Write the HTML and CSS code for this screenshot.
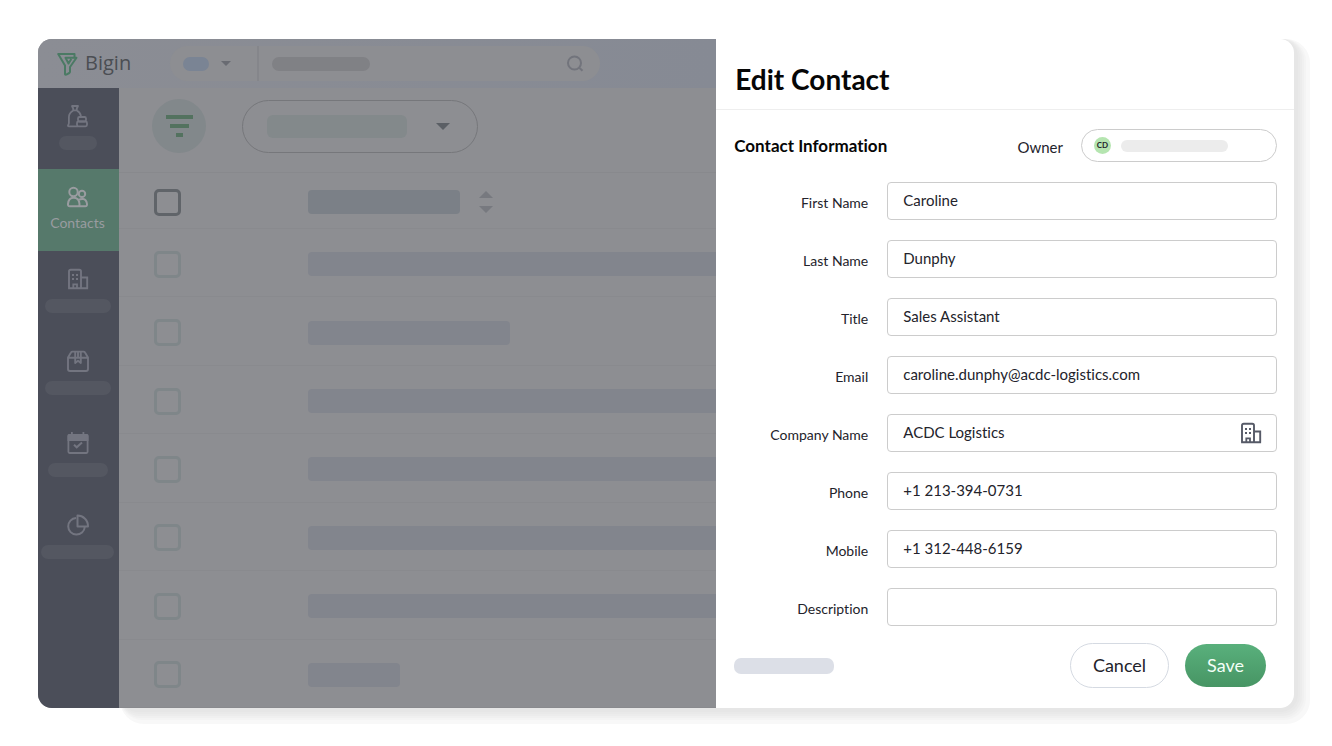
FILE: index.html
```html
<!DOCTYPE html>
<html lang="en">
<head>
<meta charset="utf-8">
<title>Bigin - Edit Contact</title>
<link rel="stylesheet" href="styles.css">
</head>
<body>
<svg class="sprite" aria-hidden="true">
  <symbol id="building" viewBox="0 0 22 22">
    <path d="M2 20.300V3.500Q2 1.800 3.700 1.800H12.300Q14 1.800 14 3.500V20.300M14 9.500H20.200V20.300M1.100 20.300H21.100" fill="none" stroke="currentColor" stroke-width="1.900"/>
    <path d="M6.300 20V16.300H10V20" fill="none" stroke="currentColor" stroke-width="1.800"/>
    <path d="M5 6h2v2H5zM9 6h2v2H9zM5 10h2v2H5zM9 10h2v2H9z" fill="currentColor"/>
  </symbol>
</svg>
<div class="app">
  <section class="workspace">
    <header class="topbar">
      <a class="brand" href="#">
        <svg width="21" height="24" viewBox="0 0 21 24" fill="none" stroke="currentColor" stroke-width="2" stroke-linejoin="round"><path d="M17.500 5V2H1.200L8 13.500V22Q8 23 9.300 22.600L12.300 21Q13 20.600 13 19.500V15L19.500 5.700H8.500L11.500 11.500L14.300 7"/></svg>
        <span>Bigin</span>
      </a>
      <div class="search">
        <button class="scope" type="button" aria-label="Search scope"><span class="bone bone-blue"></span><span class="caret caret-small"></span></button>
        <button class="query" type="button" aria-label="Search"><span class="bone bone-query"></span>
          <svg width="18" height="18" viewBox="0 0 18 18" fill="none" stroke="currentColor" stroke-width="2"><circle cx="8.500" cy="8" r="6.500"/><path d="M13 12.500L16.500 15.800"/></svg>
        </button>
      </div>
    </header>
    <div class="body">
      <nav class="sidebar" aria-label="Modules">
        <a href="#" aria-label="Deals"><svg width="24" height="24" viewBox="0 0 22 24" fill="none" stroke="currentColor" stroke-width="1.800" stroke-linejoin="round"><path d="M5 2H11L9.800 4.500V6.300H6.200V4.500ZM6.200 6.500Q2 9 1.900 13V19Q1.900 20 1 21.500Q.9 22.300 1.800 22.300H11M9.800 6.500Q13 8 14 12"/><rect x="11" y="13" width="8" height="4.500" rx="1.500"/><rect x="10" y="17.500" width="10" height="4.800" rx="1.500"/></svg><span class="bone nav-bone-s"></span></a>
        <a href="#" class="active"><svg width="24" height="24" viewBox="0 0 23 24" fill="none" stroke="currentColor" stroke-width="2"><circle cx="7" cy="7" r="4.200"/><circle cx="15.500" cy="8.900" r="3.200"/><path d="M3.200 21.300Q1.300 21.300 1.500 19Q2 12.800 7.200 12.800Q12.500 12.800 13 19Q13.100 21.300 11.300 21.300ZM12.500 21.300H18.800Q20.700 21.300 20.500 19Q20 14.500 16.500 14.100Q14 13.900 12 15.200"/></svg><span>Contacts</span></a>
        <a href="#" aria-label="Companies"><svg width="24" height="24" viewBox="0 0 24 24"><use href="#building" x="1" y="1" width="22" height="22"/></svg><span class="bone nav-bone-l"></span></a>
        <a href="#" aria-label="Products"><svg width="24" height="24" viewBox="0 0 24 24" fill="none" stroke="currentColor" stroke-width="1.900" stroke-linejoin="round"><path d="M2 8.500V20Q2 22 4 22H20Q22 22 22 20V8.500L19 3.500Q18.500 2.600 17.500 2.600H6.500Q5.500 2.600 5 3.500ZM2 8.800H22M9.200 3V14L12 11.800L14.800 14V3M12 3V8.500"/></svg><span class="bone nav-bone-l"></span></a>
        <a href="#" aria-label="Activities"><svg width="24" height="24" viewBox="0 0 24 24"><path d="M1.500 10V4.500Q1.500 3 3 3H5V1H6.800V3H16.500V1H18.300V3H21Q22.500 3 22.500 4.500V10Z" fill="currentColor"/><rect x="2.400" y="4" width="19.200" height="18" rx="1.200" fill="none" stroke="currentColor" stroke-width="1.800"/><path d="M8 13.800L10.700 16.300L16 11.500" fill="none" stroke="currentColor" stroke-width="2"/></svg><span class="bone nav-bone-m"></span></a>
        <a href="#" aria-label="Reports"><svg width="24" height="24" viewBox="0 0 24 24" fill="none" stroke="currentColor" stroke-width="2" stroke-linejoin="round"><path d="M10 5A8.300 8.300 0 1 0 18.800 14M11.500 2.500V13.500H22Q22 8.500 18.800 5.500Q15.800 2.500 11.500 2.500Z"/></svg><span class="bone nav-bone-xl"></span></a>
      </nav>
      <main class="list">
        <div class="toolbar">
          <button class="filter" type="button" aria-label="Filter"><span></span><span></span><span></span></button>
          <button class="view" type="button" aria-label="Choose view"><span class="bone bone-view"></span><span class="caret"></span></button>
        </div>
        <div class="rows">
          <div class="row head"><input type="checkbox" aria-label="Select all"><span class="bar"></span><button class="sort" type="button" aria-label="Sort"><i class="up"></i><i class="down"></i></button></div>
          <div class="row"><input type="checkbox" aria-label="Select row 1"><span class="bar full"></span></div>
          <div class="row"><input type="checkbox" aria-label="Select row 2"><span class="bar mid"></span></div>
          <div class="row"><input type="checkbox" aria-label="Select row 3"><span class="bar full"></span></div>
          <div class="row"><input type="checkbox" aria-label="Select row 4"><span class="bar full"></span></div>
          <div class="row"><input type="checkbox" aria-label="Select row 5"><span class="bar full"></span></div>
          <div class="row"><input type="checkbox" aria-label="Select row 6"><span class="bar full"></span></div>
          <div class="row"><input type="checkbox" aria-label="Select row 7"><span class="bar short"></span></div>
        </div>
      </main>
    </div>
  </section>
  <form class="panel">
    <header class="panel-head"><h1>Edit Contact</h1></header>
    <div class="section-head">
      <h2>Contact Information</h2>
      <label for="owner">Owner</label>
      <button id="owner" class="owner" type="button"><span class="avatar">CD</span><span class="bone bone-owner"></span></button>
    </div>
    <div class="fields">
      <label for="first">First Name</label><input id="first" type="text" value="Caroline">
      <label for="last">Last Name</label><input id="last" type="text" value="Dunphy">
      <label for="title">Title</label><input id="title" type="text" value="Sales Assistant">
      <label for="email">Email</label><input id="email" type="text" value="caroline.dunphy@acdc-logistics.com">
      <label for="company">Company Name</label>
      <div class="lookup"><input id="company" type="text" value="ACDC Logistics"><svg width="22" height="22"><use href="#building"/></svg></div>
      <label for="phone">Phone</label><input id="phone" type="text" value="+1 213-394-0731">
      <label for="mobile">Mobile</label><input id="mobile" type="text" value="+1 312-448-6159">
      <label for="desc">Description</label><input id="desc" type="text">
    </div>
    <footer class="actions">
      <span class="bone bone-foot"></span>
      <button class="btn cancel" type="button">Cancel</button>
      <button class="btn save" type="submit">Save</button>
    </footer>
  </form>
</div>
</body>
</html>
```
FILE: styles.css
```css
* { box-sizing: border-box; }
body {
  margin: 0;
  min-height: 100vh;
  padding: 39px 38px 38px;
  display: flex;
  background: #fff;
  color: #23232b;
  font-family: Lato, "Open Sans", sans-serif;
  font-variant-ligatures: none;
}
button { padding: 0; border: 0; background: none; font: inherit; font-variant-ligatures: none; color: inherit; }
a { color: inherit; text-decoration: none; }
.sprite { position: absolute; width: 0; height: 0; }
.bone { display: block; }
.caret { border: 7px solid transparent; border-top-color: #5b5f65; border-bottom: 0; }
.caret-small { border-width: 5px; border-bottom: 0; }

.app { position: relative; z-index: 0; flex: 1; display: flex; }
.app::before {
  content: "";
  position: absolute;
  z-index: -1;
  inset: 0 0 0 82px;
  border-radius: 16px;
  box-shadow: 2px 2px 0 2px #e6e6e6, 3px 3px 0 3px #e9e9e9, 4px 4px 0 4px #ececec, 5px 5px 0 5px #f0f0f0, 6px 6px 0 6px #f4f4f4, 8px 8px 0 8px #f8f8f8;
}

.workspace {
  flex: 1;
  min-width: 0;
  display: flex;
  flex-direction: column;
  overflow: hidden;
  border-radius: 14px 0 0 14px;
  background: #8d8e92;
}
.topbar { display: flex; align-items: center; height: 49px; padding-left: 19px; background: linear-gradient(90deg, #8b8d94, #868a94); }
.brand { display: flex; align-items: center; gap: 7px; width: 113px; color: #4b4e53; font: 500 20px/28px "Open Sans", sans-serif; }
.brand svg { color: #4b7a64; }
.brand span { padding-bottom: 2px; }
.search { display: flex; height: 35px; width: 430px; border-radius: 18px; background: #8d8e92; color: #72747c; }
.scope { display: flex; align-items: center; gap: 12px; width: 89px; padding-left: 13px; border-right: 2px solid #85868b; }
.query { flex: 1; display: flex; align-items: center; justify-content: space-between; padding: 0 16px 0 13px; }
.bone-blue { width: 26px; height: 14px; border-radius: 7px; background: #7a8494; }
.bone-query { width: 98px; height: 14px; border-radius: 7px; background: #808185; }
.scope .caret { border-top-color: #696b72; }

.body { flex: 1; display: flex; }
.sidebar { width: 81px; background: #4b4e59; color: #737580; }
.sidebar a { display: flex; flex-direction: column; align-items: center; gap: 8px; height: 82px; padding-top: 16px; padding-right: 2px; }
.sidebar a:first-child { height: 81px; }
.sidebar .bone { height: 14px; border-radius: 7px; background: #545761; }
.sidebar .active { gap: 5px; background: #56796b; color: #999ca0; font-size: 14px; line-height: 18px; }
.nav-bone-s { width: 38px; }
.nav-bone-m { width: 60px; }
.nav-bone-l { width: 66px; }
.nav-bone-xl { width: 73px; }

.list { flex: 1; min-width: 0; display: flex; flex-direction: column; }
.toolbar { display: flex; align-items: center; gap: 36px; height: 85px; padding: 0 0 8px 33px; border-bottom: 1px solid #88898d; }
.filter { display: flex; flex-direction: column; align-items: center; justify-content: center; gap: 5px; width: 54px; height: 54px; border-radius: 50%; background: #82888b; }
.filter span { width: 27px; height: 4px; background: #53725f; }
.filter span:nth-child(2) { width: 19px; }
.filter span:nth-child(3) { width: 7px; }
.view { display: flex; align-items: center; justify-content: space-between; width: 236px; height: 53px; padding: 0 27px 0 24px; border: 1px solid #76777b; border-radius: 27px; }
.bone-view { width: 140px; height: 23px; border-radius: 6px; background: #83898b; }

.rows { flex: 1; display: flex; flex-direction: column; }
.row { flex: 1; display: flex; align-items: center; padding: 3px 0 0 35px; border-bottom: 1px solid #898a8e; }
.row.head { flex: 0 0 56px; }
.row input { appearance: none; flex: none; width: 27px; height: 27px; margin: 0 127px 0 0; border: 3px solid #7f8689; border-radius: 5px; }
.row.head input { border-color: #606469; }
.bar { width: 152px; height: 24px; border-radius: 4px; background: #7b8087; }
.row:not(.head) .bar { background: #82858d; }
.bar.full { flex: 1; border-radius: 4px 0 0 4px; }
.bar.mid { width: 202px; }
.row .bar.short { width: 92px; }
.sort { display: flex; flex-direction: column; gap: 8px; margin-left: 19px; }
.sort i { border: 7px solid transparent; }
.sort .up { border-top: 0; border-bottom-color: #77797f; }
.sort .down { border-bottom: 0; border-top-color: #77797f; }

.panel { flex: 0 0 46%; display: flex; flex-direction: column; border-radius: 0 14px 14px 0; background: #fff; }
.panel-head { padding: 22px 19px 12px; border-bottom: 1px solid #eee; }
h1, h2 { margin: 0; color: #060606; }
h1 { font-size: 28px; line-height: 36px; }
h2 { flex: 1; font-size: 17px; line-height: 20px; }
.section-head { display: flex; align-items: center; padding: 19px 17px 20px 18px; font-size: 15px; }
.section-head label { padding-top: 2px; }
.owner { display: flex; align-items: center; gap: 10px; width: 196px; height: 33px; margin-left: 18px; padding-left: 12px; border: 1px solid #ccc; border-radius: 17px; }
.avatar { width: 17px; height: 17px; border-radius: 50%; background: #b5e5b0; font-size: 8px; font-weight: 700; line-height: 16px; text-align: center; }
.bone-owner { width: 107px; height: 12px; border-radius: 6px; background: #ececec; }

.fields { display: grid; grid-template-columns: 134px 1fr; gap: 20px 19px; align-items: center; padding: 0 17px 0 18px; }
.fields label { padding-top: 3px; font-size: 14px; line-height: 18px; text-align: right; }
.fields input { width: 100%; height: 38px; padding: 0 15px 2px; border: 1px solid #ccc; border-radius: 4px; background: #fff; color: #23232b; font: 15px Lato, sans-serif; font-variant-ligatures: none; }
.lookup { position: relative; }
.lookup svg { position: absolute; right: 15px; top: 8px; color: #565a67; }

.actions { display: flex; align-items: center; gap: 16px; margin-top: auto; padding: 16px 28px 20px 18px; }
.bone-foot { width: 100px; height: 16px; margin-right: auto; border-radius: 7px; background: #dcdfe7; }
.btn { height: 45px; padding-bottom: 2px; border-radius: 23px; font-size: 18px; }
.cancel { width: 99px; border: 1px solid #d5dae2; }
.save { width: 81px; height: 43px; background: linear-gradient(#59b07c, #479564); color: #f4fff8; }
```
